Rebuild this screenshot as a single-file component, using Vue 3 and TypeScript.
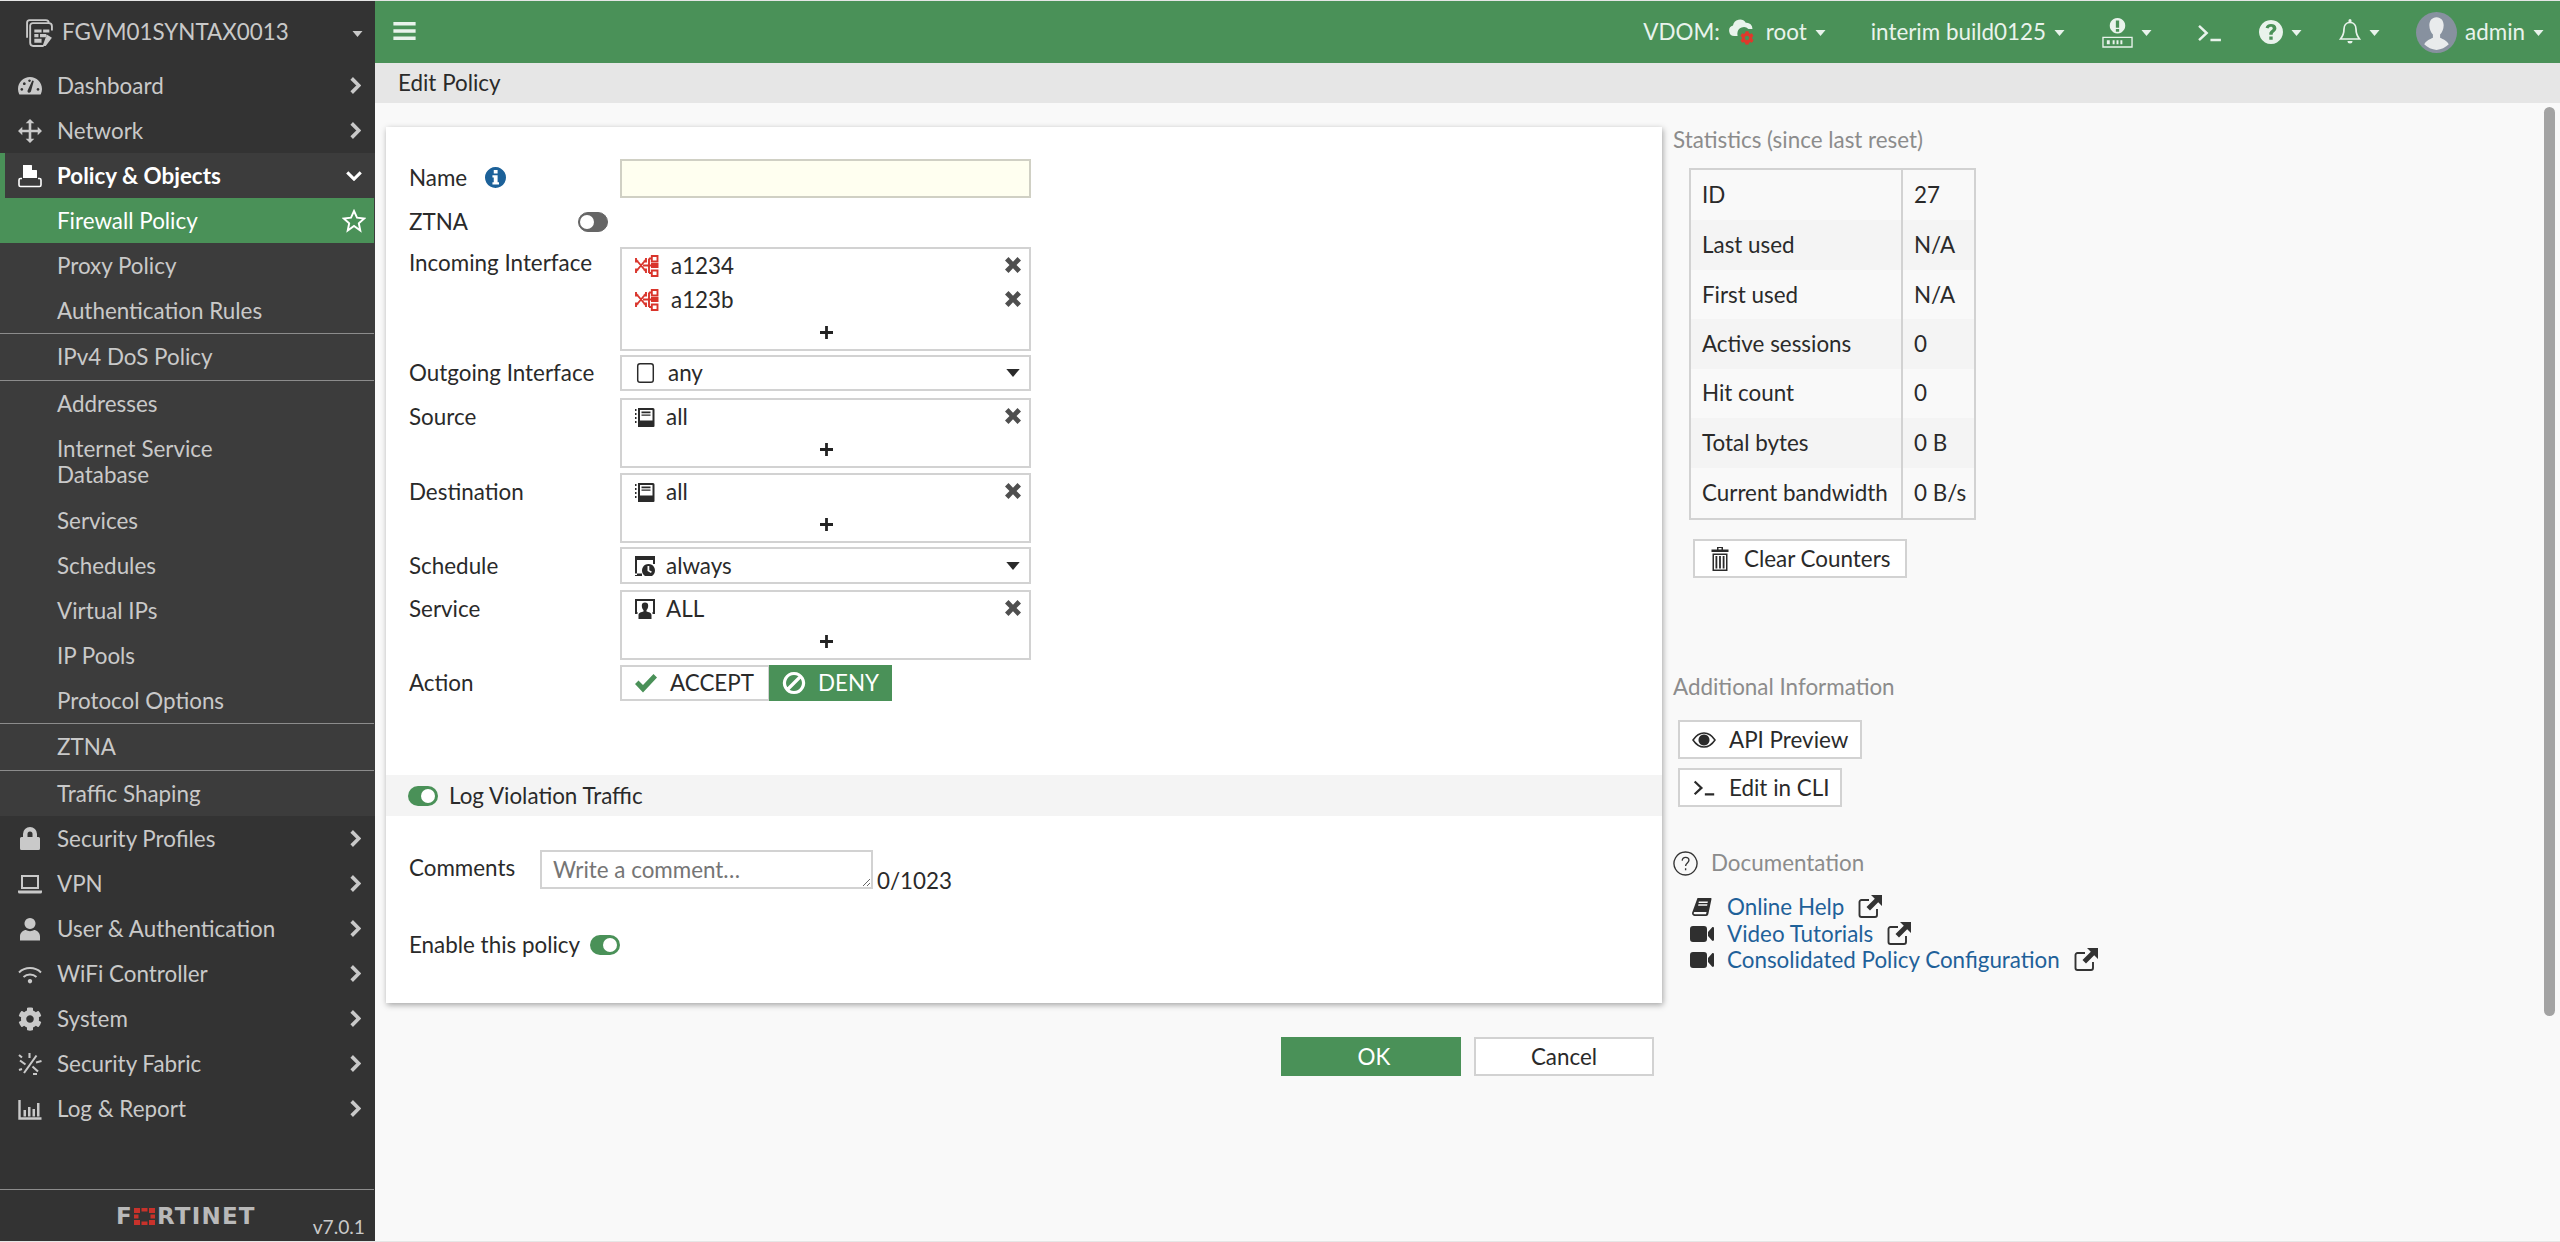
<script setup lang="ts">
import { h } from 'vue'
import type { FunctionalComponent } from 'vue'

interface IconDef {
  vb?: string
  fill?: string
  stroke?: string
  sw?: number
}

const icons: Record<string, IconDef> = {
  device: {
    stroke: 'M2 19V4.500A2.500 2.500 0 0 1 4.500 2H20a3 3 0 0 1 3 3M5 24V7.500A2.500 2.500 0 0 1 7.500 5H23a3 3 0 0 1 3 3v4M5 24a3 3 0 0 0 3 3h10',
    fill: 'M9 11h7v3H9zM17.500 11h6v3h-6zM9 15.500h4v3H9zM14.500 15.500h6v3h-6zM9 20h7v4H9zM21 16l5 3-6 8h-3z',
    vb: '0 0 28 28',
    sw: 1.8,
  },
  dashboard: {
    fill: 'M12 3C5.400 3 0 8.400 0 15c0 1.800.4 3.500 1.100 5 .2.400.5.600.9.600h20c.4 0 .7-.2.9-.6.7-1.500 1.100-3.200 1.100-5 0-6.600-5.400-12-12-12zM3.800 14a1.400 1.400 0 1 0 .01 0zM6.300 8.300a1.400 1.400 0 1 0 .01 0zM11.500 5.400a1.300 1.300 0 1 0 .01 0zM20 14a1.400 1.400 0 1 0 .01 0zM14.300 6.500l1.500.5-2.800 10.300c-.3 1-1.200 1.700-2.200 1.400-1-.3-1.500-1.300-1.200-2.300z',
  },
  network: {
    fill: 'M12 0l4.300 4.300H13.300V10.700H19.700V7.700L24 12l-4.300 4.300V13.300H13.300V19.700H16.300L12 24 7.700 19.700H10.700V13.300H4.300V16.300L0 12 4.300 7.700V10.700H10.700V4.300H7.700z',
  },
  policy: {
    fill: 'M5 1h8.500L19 6.500V14H5zM14 1.500V6h4.500z',
    stroke: 'M4 14.500H2.500A1.500 1.500 0 0 0 1 16v5a1.500 1.500 0 0 0 1.500 1.500h19A1.500 1.500 0 0 0 23 21v-5a1.500 1.500 0 0 0-1.500-1.500H20',
    sw: 1.6,
  },
  lock: {
    fill: 'M5 10V7a7 7 0 0 1 14 0v3h1.500A1.500 1.500 0 0 1 22 11.500v10a1.500 1.500 0 0 1-1.500 1.500h-17A1.500 1.500 0 0 1 2 21.500v-10A1.500 1.500 0 0 1 3.500 10zm4.500 0h5V7a2.500 2.500 0 0 0-5 0z',
  },
  laptop: {
    fill: 'M3 3h18v14H3zM5 5v10h14V5zM0 18.500h24V20a1.500 1.500 0 0 1-1.500 1.500h-21A1.500 1.500 0 0 1 0 20z',
  },
  user: {
    fill: 'M12 1a5.500 5.500 0 1 1-.01 0zM2 23.500v-4c0-4 3.500-6.500 6-6.500 1 .7 2.500 1.200 4 1.200s3-.5 4-1.200c2.500 0 6 2.500 6 6.500v4z',
  },
  wifi: {
    stroke: 'M1 10.500a16 16 0 0 1 22 0M5.500 15a9.500 9.500 0 0 1 13 0',
    fill: 'M12 17a2.200 2.200 0 1 1-.01 0z',
    sw: 2,
  },
  cog: {
    vb: '0 0 512 512',
    fill: 'M487.4 315.7l-42.6-24.6c4.3-23.2 4.3-47 0-70.2l42.6-24.6c4.900-2.800 7.100-8.600 5.500-14-11.100-35.600-30-67.800-54.700-94.600-3.800-4.100-10-5.100-14.800-2.300L380.800 110c-17.900-15.400-38.500-27.300-60.800-35.100V25.800c0-5.600-3.900-10.500-9.400-11.700-36.700-8.200-74.300-7.800-109.200 0-5.500 1.200-9.400 6.100-9.400 11.700V75c-22.200 7.900-42.800 19.800-60.800 35.100L88.700 85.500c-4.900-2.800-11-1.900-14.800 2.300-24.700 26.700-43.600 58.900-54.700 94.600-1.700 5.400.6 11.200 5.500 14L67.300 221c-4.300 23.200-4.300 47 0 70.200l-42.6 24.600c-4.900 2.800-7.100 8.600-5.500 14 11.100 35.600 30 67.800 54.700 94.600 3.800 4.100 10 5.100 14.800 2.300l42.600-24.600c17.900 15.400 38.500 27.300 60.800 35.100v49.200c0 5.600 3.900 10.500 9.400 11.700 36.700 8.200 74.300 7.800 109.200 0 5.500-1.200 9.400-6.100 9.400-11.700v-49.200c22.200-7.900 42.800-19.800 60.800-35.100l42.600 24.600c4.900 2.800 11 1.900 14.800-2.300 24.700-26.700 43.600-58.900 54.700-94.600 1.500-5.500-.7-11.300-5.600-14.100zM256 336c-44.100 0-80-35.900-80-80s35.900-80 80-80 80 35.900 80 80-35.900 80-80 80z',
  },
  fabric: {
    stroke: 'M18.500 3.500L6 21M2 8.500l5.500 4M14.500 14.500l5.500 5M11.500 1v5M18 10.500l5.500-1.500M1 3l3 2.500M15 22h4M1 18l3-1',
    sw: 2.100,
  },
  chart: {
    stroke: 'M1.500 3v18.500h22',
    fill: 'M5.500 13h2.500v6.500H5.500zM10 10h2.500v9.500H10zM14.500 12h2.500v7.500h-2.500zM19 6h2.500v13.500H19z',
    sw: 2.400,
  },
  chevRight: { vb: '0 0 12 20', stroke: 'M2.500 2.500l7.500 7.500-7.500 7.500', sw: 3.800 },
  chevDown: { vb: '0 0 20 12', stroke: 'M2.500 2.500l7.500 7.500 7.500-7.500', sw: 3.400 },
  star: { stroke: 'M12 2l3 6.700 7.200.8-5.400 4.800 1.500 7.200L12 17l-6.300 4.500 1.500-7.200L1.800 9.500l7.200-.8z', sw: 1.900 },
  caret: { vb: '0 0 10 6', fill: 'M0 0h10L5 6z' },
  menu: { vb: '0 0 20 18', fill: 'M0 1h20v3H0zM0 7.500h20v3H0zM0 14h20v3H0z' },
  vdom: {
    vb: '0 0 24 17',
    fill: 'M5.500 17A5.300 5.300 0 0 1 4 6.600 7 7 0 0 1 16.800 3.800 5.800 5.800 0 0 1 23.400 10h-4a6.500 6.500 0 0 0-11 4c-.1 1 0 2 .2 3z',
  },
  alert: {
    vb: '0 0 32 32',
    fill: 'M16 1a8 8 0 1 1-.01 0zM14.300 3.500v7.500h3.400V3.500zM14.300 12.300v2.800h3.400v-2.800zM5 24h3v4H5zM11 24h2v4h-2zM15 24h2v4h-2zM19 24h2v4h-2z',
    stroke: 'M1 21h30v10H1z',
    sw: 1.400,
  },
  terminal: { vb: '0 0 26 20', stroke: 'M2 3l8 7.500L2 18M14 18h11', sw: 2.600 },
  help: {
    fill: 'M12 0a12 12 0 1 1-.01 0zM12 4c-3 0-4.900 1.400-5.400 3.800l3 .8c.3-1.100 1-1.800 2.200-1.800 1.200 0 2 .6 2 1.500 0 1.900-3.500 2.300-3.500 5.700v.8h3.400v-.5c0-2.200 3.700-2.800 3.700-6.100C17.400 5.500 15.200 4 12 4zM10.300 16.500v3.300h3.400v-3.300z',
  },
  bell: {
    vb: '0 0 22 26',
    stroke: 'M11 3.500c-4 0-6 3-6 6.500 0 5-1.500 7.500-3.500 10h19c-2-2.500-3.500-5-3.500-10 0-3.500-2-6.500-6-6.500z',
    fill: 'M9.500 1.500a1.500 1.500 0 0 1 3 0V4h-3zM8.500 22h5a2.500 2.500 0 0 1-5 0z',
    sw: 1.700,
  },
  info: {
    fill: 'M12 0a12 12 0 1 1-.01 0zM10 3.500v3.800h4.400V3.500zM8.500 9.500v2.500H10v5.500H8.500V20h7.500v-2.500h-1.600v-8z',
  },
  iface: {
    vb: '0 0 24 22',
    stroke: 'M1 4.500l10 12M1 16.500l10-12M1 3v3.500h2.500M1 18v-3.500h2.500M11 3v3.500H8.500M11 18v-3.500H8.500M8 10.500h8M14 3.500v14.500M14 3.500h2M14 18h2M16.800 1h5.700v5.500h-5.700zM16.800 15.500h5.700V21h-5.700z',
    sw: 1.900,
    fill: 'M16 8h7.500v5H16z',
  },
  square: { vb: '0 0 20 24', stroke: 'M4 2h12a2.500 2.500 0 0 1 2.500 2.500v15A2.500 2.500 0 0 1 16 22H4a2.500 2.500 0 0 1-2.500-2.500v-15A2.500 2.500 0 0 1 4 2z', sw: 1.600 },
  close: { vb: '0 0 16 18', fill: 'M3.500 1L8 5.800 12.500 1 16 4.500 11.500 9 16 13.500 12.500 17 8 12.200 3.500 17 0 13.500 4.500 9 0 4.500z' },
  plus: { vb: '0 0 14 14', fill: 'M5.500 0h3v5.500H14v3H8.500V14h-3V8.500H0v-3h5.500z' },
  book: {
    vb: '0 0 20 20',
    fill: 'M3 1h15a1.500 1.500 0 0 1 1.500 1.500V19a1 1 0 0 1-1 1H3zM5 3v10.500h12.500V3zM6.500 4.500h9v1.800h-9zM6.500 7.500h9v1.300h-9zM0 2h1.500v2H0zM0 6h1.500v2H0zM0 10h1.500v2H0zM0 14h1.500v2H0z',
  },
  sched: {
    vb: '0 0 20 20',
    fill: 'M0 0h20v4H0zM0 4h2v15H0zM0 17.500h7V20H0zM13.500 8a6.500 6.500 0 1 1-.01 0zM12.500 10v5l3.500 2 .8-1.400-2.500-1.400V10zM18 4h2v4h-2z',
  },
  service: {
    vb: '0 0 20 20',
    fill: 'M0 0h20v15h-2.500v-2H18V2H2v11h.5v2H0zM10 3.500a3.200 3.200 0 0 1 3.200 3.200c0 2-1 3.800-1.700 4.300v1.500c2 .5 5 1.200 5 3.500v4H3.500v-4c0-2.300 3-3 5-3.500V11c-.7-.5-1.700-2.300-1.700-4.300A3.200 3.200 0 0 1 10 3.500z',
  },
  check: { vb: '0 0 22 20', fill: 'M0 11l3.500-3.500L8 12 18.500 1 22 4.500 8 19.500z' },
  deny: { vb: '0 0 24 24', stroke: 'M12 2.500a9.500 9.500 0 1 1-.01 0zM5.500 18.500l13-13', sw: 3.200 },
  trash: {
    vb: '0 0 18 24',
    fill: 'M6 0h6v2.500h5.500V5H.5V2.500H6zM7.500 1v1.500h3V1zM1.500 6.500h15V24h-15zM3 8v14.500h12V8zM4.500 9h1.800v12.500H4.500zM8.100 9h1.800v12.500H8.100zM11.700 9h1.800v12.500h-1.800z',
  },
  eye: {
    vb: '0 0 24 16',
    stroke: 'M1 8c3-4.500 6.800-7 11-7s8 2.500 11 7c-3 4.500-6.800 7-11 7S4 12.500 1 8z',
    fill: 'M12 2.500a5.500 5.500 0 1 1-.01 0z',
    sw: 1.500,
  },
  helpRing: { stroke: 'M12 1a11 11 0 1 1-.01 0zM8.800 9.300c.2-2 1.500-3.200 3.300-3.200 1.900 0 3.200 1.100 3.200 2.800 0 2.600-3.200 2.600-3.200 5.500M12.100 16.500v2', sw: 1.300 },
  handbook: {
    vb: '0 0 22 20',
    fill: 'M6 0h14.500a1 1 0 0 1 1 1.300L18 18a2.500 2.500 0 0 1-2.500 2H3a3 3 0 0 1-3-3.500zM7.500 4l-.3 1.500h10l.3-1.500zM7 7l-.3 1.500h10L17 7zM3 15.500c-.8 0-1.300.7-1.300 1.300 0 .7.5 1.200 1.300 1.200h12.400c.4-.8.500-1.700.6-2.500z',
  },
  video: {
    vb: '0 0 24 18',
    fill: 'M3 1h11a3 3 0 0 1 3 3v10a3 3 0 0 1-3 3H3a3 3 0 0 1-3-3V4a3 3 0 0 1 3-3zM18 7l4-4.500c.8-.8 2-.3 2 .8v11.400c0 1.100-1.200 1.600-2 .8l-4-4.500z',
  },
  external: {
    stroke: 'M11 5H3.500A2 2 0 0 0 1.500 7v13a2 2 0 0 0 2 2H17a2 2 0 0 0 2-2v-6',
    fill: 'M13 0h11v11l-3.800-3.800L12 15.500 8.500 12 16.800 3.800z',
    sw: 1.900,
  },
}

const Ico: FunctionalComponent<{ name: string }> = (props) => {
  const def = icons[props.name]
  const kids = []
  if (def.fill) kids.push(h('path', { d: def.fill, fill: 'currentColor', 'fill-rule': 'evenodd' }))
  if (def.stroke) {
    kids.push(h('path', { d: def.stroke, fill: 'none', stroke: 'currentColor', 'stroke-width': def.sw ?? 2 }))
  }
  return h('svg', { viewBox: def.vb ?? '0 0 24 24', 'aria-hidden': 'true' }, kids)
}

const navTop = [
  { label: 'Dashboard', icon: 'dashboard' },
  { label: 'Network', icon: 'network' },
]

const groupItems = [
  { label: 'Firewall Policy', active: true },
  { label: 'Proxy Policy' },
  { label: 'Authentication Rules', divided: true },
  { label: 'IPv4 DoS Policy', divided: true, wide: true },
  { label: 'Addresses' },
  { label: 'Internet Service Database', tall: true },
  { label: 'Services' },
  { label: 'Schedules' },
  { label: 'Virtual IPs' },
  { label: 'IP Pools' },
  { label: 'Protocol Options', divided: true },
  { label: 'ZTNA', divided: true, wide: true },
  { label: 'Traffic Shaping' },
]

const navBottom = [
  { label: 'Security Profiles', icon: 'lock' },
  { label: 'VPN', icon: 'laptop' },
  { label: 'User & Authentication', icon: 'user' },
  { label: 'WiFi Controller', icon: 'wifi' },
  { label: 'System', icon: 'cog' },
  { label: 'Security Fabric', icon: 'fabric' },
  { label: 'Log & Report', icon: 'chart' },
]

const stats = [
  ['ID', '27'],
  ['Last used', 'N/A'],
  ['First used', 'N/A'],
  ['Active sessions', '0'],
  ['Hit count', '0'],
  ['Total bytes', '0 B'],
  ['Current bandwidth', '0 B/s'],
]

const docs = [
  { label: 'Online Help', icon: 'handbook' },
  { label: 'Video Tutorials', icon: 'video' },
  { label: 'Consolidated Policy Configuration', icon: 'video' },
]
</script>

<template>
  <div class="app">
    <aside class="sidebar">
      <div class="device">
        <Ico name="device" class="device-icon" />
        <span class="device-name">FGVM01SYNTAX0013</span>
        <Ico name="caret" class="device-caret" />
      </div>
      <nav class="nav">
        <a v-for="n in navTop" :key="n.label" class="nav-row">
          <Ico :name="n.icon" class="nav-icon" />
          <span class="nav-label">{{ n.label }}</span>
          <Ico name="chevRight" class="chev" />
        </a>
        <div class="group">
          <a class="nav-row open">
            <Ico name="policy" class="nav-icon" />
            <span class="nav-label">Policy &amp; Objects</span>
            <Ico name="chevDown" class="chev-down" />
          </a>
          <a
            v-for="g in groupItems"
            :key="g.label"
            class="sub-row"
            :class="{ active: g.active, divided: g.divided, tall: g.tall, wide: g.wide }"
          >
            <span class="sub-label">{{ g.label }}</span>
            <Ico v-if="g.active" name="star" class="star" />
          </a>
        </div>
        <a v-for="n in navBottom" :key="n.label" class="nav-row">
          <Ico :name="n.icon" class="nav-icon" />
          <span class="nav-label">{{ n.label }}</span>
          <Ico name="chevRight" class="chev" />
        </a>
      </nav>
      <footer class="side-foot">
        <div class="logo">
          <span>F</span>
          <svg class="logo-grid" viewBox="0 0 21 17" aria-hidden="true">
            <path d="M0 0h6v5H0zM7.500 0h6v3.500h-6zM15 0h6v5h-6zM0 6.500h4.500v4H0zM16.500 6.500H21v4h-4.500zM0 12h6v5H0zM7.500 13.500h6V17h-6zM15 12h6v5h-6z" fill="#c8322b" />
          </svg>
          <span>RTINET</span>
        </div>
        <span class="version">v7.0.1</span>
      </footer>
    </aside>

    <div class="workspace">
      <header class="topbar">
        <Ico name="menu" class="hamburger" />
        <div class="top-items">
          <div class="top-item vdom">
            <span>VDOM:</span>
            <span class="vdom-mark">
              <Ico name="vdom" class="vdom-cloud" />
              <Ico name="cog" class="vdom-gear" />
            </span>
            <span class="vdom-name">root</span>
            <Ico name="caret" class="top-caret" />
          </div>
          <div class="top-item build">
            <span>interim build0125</span>
            <Ico name="caret" class="top-caret" />
          </div>
          <div class="top-item alert">
            <Ico name="alert" class="alert-icon" />
            <Ico name="caret" class="top-caret" />
          </div>
          <div class="top-item term">
            <Ico name="terminal" class="term-icon" />
          </div>
          <div class="top-item help">
            <Ico name="help" class="help-icon" />
            <Ico name="caret" class="top-caret" />
          </div>
          <div class="top-item bell">
            <Ico name="bell" class="bell-icon" />
            <Ico name="caret" class="top-caret" />
          </div>
          <div class="top-item admin">
            <svg class="avatar" viewBox="0 0 40 40" aria-hidden="true">
              <circle cx="20" cy="20" r="20" fill="#87919f" />
              <path d="M20 5c4.500 0 7 3.500 7 8 0 4-1.800 7.500-3.500 9v3c3 1.500 7 3 8.500 6.500A20 20 0 0 1 20 37a20 20 0 0 1-12-5.500C9.500 28 13.500 26.500 16.500 25v-3C14.800 20.500 13 17 13 13c0-4.500 2.500-8 7-8z" fill="#e9ebec" />
            </svg>
            <span>admin</span>
            <Ico name="caret" class="top-caret" />
          </div>
        </div>
      </header>

      <div class="crumb">Edit Policy</div>

      <main class="content">
        <div class="left-col">
          <section class="card">
            <div class="row">
              <label class="lbl name-lbl">Name <Ico name="info" class="info-icon" /></label>
              <input class="name-input" type="text" />
            </div>
            <div class="row ztna-row">
              <span class="lbl ztna-lbl">ZTNA</span>
              <span class="toggle off"></span>
            </div>
            <div class="row top">
              <span class="lbl first">Incoming Interface</span>
              <div class="multi incoming">
                <div class="entry"><Ico name="iface" class="iface" /><span class="ent-text wide">a1234</span><Ico name="close" class="x" /></div>
                <div class="entry"><Ico name="iface" class="iface" /><span class="ent-text wide">a123b</span><Ico name="close" class="x" /></div>
                <Ico name="plus" class="add" />
              </div>
            </div>
            <div class="row gap4">
              <span class="lbl">Outgoing Interface</span>
              <div class="select outgoing">
                <Ico name="square" class="square" />
                <span class="ent-text wide">any</span>
                <Ico name="caret" class="sel-caret" />
              </div>
            </div>
            <div class="row top gap7">
              <span class="lbl">Source</span>
              <div class="multi single">
                <div class="entry"><Ico name="book" class="obj" /><span class="ent-text">all</span><Ico name="close" class="x" /></div>
                <Ico name="plus" class="add" />
              </div>
            </div>
            <div class="row top gap5">
              <span class="lbl">Destination</span>
              <div class="multi single">
                <div class="entry"><Ico name="book" class="obj" /><span class="ent-text">all</span><Ico name="close" class="x" /></div>
                <Ico name="plus" class="add" />
              </div>
            </div>
            <div class="row top gap4">
              <span class="lbl">Schedule</span>
              <div class="select schedule">
                <Ico name="sched" class="obj" />
                <span class="ent-text">always</span>
                <Ico name="caret" class="sel-caret" />
              </div>
            </div>
            <div class="row top gap6">
              <span class="lbl">Service</span>
              <div class="multi single">
                <div class="entry"><Ico name="service" class="obj" /><span class="ent-text">ALL</span><Ico name="close" class="x" /></div>
                <Ico name="plus" class="add" />
              </div>
            </div>
            <div class="row gap5">
              <span class="lbl">Action</span>
              <div class="actions">
                <span class="act accept"><Ico name="check" class="act-icon green" />ACCEPT</span>
                <span class="act deny"><Ico name="deny" class="act-icon" />DENY</span>
              </div>
            </div>

            <div class="band">
              <span class="toggle on"></span>
              <span>Log Violation Traffic</span>
            </div>

            <div class="row comments">
              <span class="comment-lbl">Comments</span>
              <textarea class="comment-box" placeholder="Write a comment…"></textarea>
              <span class="counter">0/1023</span>
            </div>
            <div class="row enable">
              <span>Enable this policy</span>
              <span class="toggle on"></span>
            </div>
          </section>
          <div class="form-actions">
            <button class="btn primary">OK</button>
            <button class="btn">Cancel</button>
          </div>
        </div>

        <aside class="info-panel">
          <h3 class="panel-title">Statistics (since last reset)</h3>
          <table class="stats">
            <tbody>
              <tr v-for="s in stats" :key="s[0]">
                <td class="k">{{ s[0] }}</td>
                <td class="v">{{ s[1] }}</td>
              </tr>
            </tbody>
          </table>
          <button class="tool clear"><Ico name="trash" class="trash" />Clear Counters</button>

          <h3 class="panel-title additional">Additional Information</h3>
          <button class="tool api"><Ico name="eye" class="eye" />API Preview</button>
          <button class="tool cli"><Ico name="terminal" class="cli-icon" />Edit in CLI</button>

          <h3 class="panel-title doc-title"><Ico name="helpRing" class="ring" />Documentation</h3>
          <ul class="docs">
            <li v-for="d in docs" :key="d.label">
              <Ico :name="d.icon" class="doc-icon" />
              <a class="doc-link">{{ d.label }}</a>
              <Ico name="external" class="ext" />
            </li>
          </ul>
        </aside>

        <div class="scrollbar"></div>
      </main>
    </div>
  </div>
</template>

<style>
html,
body {
  margin: 0;
  background: #e6e6e6;
}
</style>

<style scoped>
.app {
  width: 2560px;
  height: 1240px;
  margin: 1px 0;
  display: flex;
  font-family: Lato, "Noto Sans", sans-serif;
  font-size: 22.4px;
  line-height: 26px;
  color: #2a2a2a;
  overflow: hidden;
  position: relative;
}
svg {
  display: block;
  flex: none;
}

/* sidebar */
.sidebar {
  width: 375px;
  flex: none;
  background: #333;
  color: #c9c9c9;
  display: flex;
  flex-direction: column;
}
.device {
  height: 62px;
  display: flex;
  align-items: center;
  padding-left: 25px;
}
.device-icon {
  width: 29px;
  height: 29px;
  margin-right: 8px;
}
.device-name {
  flex: 1;
}
.device-caret {
  width: 11px;
  height: 6px;
  margin-right: 12px;
  margin-top: 3px;
}
.nav-row {
  height: 45px;
  display: flex;
  align-items: center;
  padding-left: 18px;
}
.nav-icon {
  width: 24px;
  height: 24px;
  margin-right: 15px;
}
.nav-label {
  flex: 1;
}
.chev {
  width: 12px;
  height: 19px;
  margin-right: 14px;
}
.chev-down {
  width: 18px;
  height: 11px;
  margin-right: 12px;
}
.group {
  background: #3c3c3c;
}
.nav-row.open {
  border-left: 5px solid #4a9158;
  padding-left: 13px;
  color: #fff;
  font-weight: 700;
}
.sub-row {
  min-height: 45px;
  box-sizing: border-box;
  display: flex;
  align-items: center;
  padding-left: 57px;
  margin-right: 1px;
}
.sub-row.divided {
  border-bottom: 1px solid #8c8c8c;
  min-height: 46px;
}
.sub-row.wide {
  min-height: 47px;
}
.sub-row.tall {
  min-height: 72px;
}
.sub-label {
  flex: 1;
  max-width: 240px;
}
.sub-row.active {
  background: #4a9158;
  color: #fff;
  justify-content: space-between;
}
.star {
  width: 24px;
  height: 24px;
  margin-right: 8px;
}
.side-foot {
  margin-top: auto;
  height: 52px;
  margin-right: 1px;
  box-sizing: border-box;
  border-top: 1px solid #8c8c8c;
  display: flex;
  justify-content: space-between;
  padding: 17px 9px 0 116px;
}
.logo {
  height: 18px;
  display: flex;
  gap: 1px;
  align-items: center;
  font-family: "DejaVu Sans", sans-serif;
  font-weight: 700;
  font-size: 23px;
  line-height: 18px;
  letter-spacing: 1.200px;
  color: #b9b9b9;
}
.logo-grid {
  width: 21px;
  height: 17px;
  margin-right: 1px;
}
.version {
  font-size: 19.200px;
  line-height: 26px;
  margin-top: 7px;
}

/* workspace */
.workspace {
  flex: 1;
  display: flex;
  flex-direction: column;
  min-width: 0;
}
.topbar {
  height: 62px;
  flex: none;
  background: #4a9158;
  color: #e9f3ec;
  display: flex;
  align-items: center;
  padding: 0 16px 0 18px;
}
.hamburger {
  width: 23px;
  height: 20px;
  margin-top: -2px;
}
.top-items {
  margin-left: auto;
  display: flex;
  align-items: center;
}
.top-item {
  display: flex;
  align-items: center;
}
.top-caret {
  width: 11px;
  height: 6px;
  margin-left: 8px;
  margin-top: 2px;
}
.vdom-mark {
  display: block;
  position: relative;
  margin: 0 12px 0 9px;
  width: 25px;
  height: 26px;
}
.vdom-cloud {
  width: 24px;
  height: 17px;
}
.vdom-gear {
  position: absolute;
  left: 11px;
  top: 12px;
  width: 14px;
  height: 14px;
  color: #e0382b;
}
.build {
  margin-left: 45px;
}
.alert {
  margin-left: 37px;
}
.alert-icon {
  width: 31px;
  height: 31px;
}
.term {
  margin-left: 45px;
}
.term-icon {
  width: 25px;
  height: 19px;
}
.help {
  margin-left: 37px;
}
.help-icon {
  width: 24px;
  height: 24px;
}
.bell {
  margin-left: 37px;
}
.bell-icon {
  width: 22px;
  height: 26px;
}
.admin {
  margin-left: 36px;
}
.avatar {
  width: 41px;
  height: 41px;
  margin-right: 8px;
}

.crumb {
  height: 40px;
  flex: none;
  background: #e6e6e6;
  box-sizing: border-box;
  padding-left: 23px;
  line-height: 40px;
}

.content {
  flex: 1;
  background: #f9f9f9;
  display: flex;
  position: relative;
  padding: 24px 0 0 11px;
  min-height: 0;
}
.left-col {
  width: 1276px;
  flex: none;
}
.card {
  height: 876px;
  box-sizing: border-box;
  background: #fff;
  padding: 32px 0 0 23px;
  box-shadow: 1px 2px 6px rgba(0, 0, 0, 0.35);
}
.row {
  display: flex;
  align-items: center;
}
.row.top {
  align-items: flex-start;
}
.lbl {
  width: 211px;
  flex: none;
  display: flex;
  align-items: center;
}
.row.top .lbl {
  padding-top: 6px;
}
.row.top .lbl.first {
  padding-top: 3px;
}
.name-lbl {
  margin-top: -2px;
}
.info-icon {
  width: 21px;
  height: 21px;
  margin-left: 18px;
  color: #1c6199;
}
.name-input {
  width: 411px;
  height: 39px;
  box-sizing: border-box;
  border: 2px solid #d0d0c4;
  background: #fffff0;
  outline: none;
  padding: 0;
  font: inherit;
}
.ztna-row {
  margin-top: 14px;
  height: 20px;
  margin-bottom: 15px;
}
.ztna-lbl {
  width: 169px;
}
.toggle {
  display: block;
  width: 30px;
  height: 20px;
  box-sizing: border-box;
  border-radius: 10px;
  position: relative;
  flex: none;
}
.toggle::after {
  content: "";
  position: absolute;
  width: 14px;
  height: 14px;
  top: 3px;
  border-radius: 50%;
  background: #fff;
}
.toggle.off {
  background: #666;
  border: 1px solid #666;
}
.toggle.off::after {
  left: 1px;
  top: 2px;
}
.toggle.on {
  background: #4a9158;
}
.toggle.on::after {
  right: 3px;
}
.gap4 {
  margin-top: 4px;
}
.gap5 {
  margin-top: 5px;
}
.gap6 {
  margin-top: 6px;
}
.gap7 {
  margin-top: 7px;
}
.multi,
.select {
  width: 411px;
  box-sizing: border-box;
  border: 2px solid #d2d2d2;
  background: #fff;
  flex: none;
}
.multi {
  display: flex;
  flex-direction: column;
}
.incoming {
  height: 104px;
}
.single {
  height: 70px;
}
.entry {
  height: 34px;
  display: flex;
  align-items: center;
  padding-left: 13px;
}
.select {
  display: flex;
  align-items: center;
  padding-left: 13px;
}
.outgoing {
  height: 36px;
}
.schedule {
  height: 37px;
}
.iface {
  width: 24px;
  height: 22px;
  color: #d9342b;
  margin-top: -1px;
}
.obj {
  width: 20px;
  height: 20px;
}
.square {
  width: 19px;
  height: 22px;
  margin-left: 1px;
  margin-right: 1px;
}
.ent-text {
  flex: 1;
  margin-left: 11px;
}
.ent-text.wide {
  margin-left: 12px;
}
.x {
  width: 16px;
  height: 18px;
  color: #4f4f4f;
  margin-right: 8px;
  margin-top: -2px;
}
.sel-caret {
  width: 14px;
  height: 8px;
  color: #2a2a2a;
  margin-right: 9px;
}
.add {
  width: 13px;
  height: 13px;
  margin: auto 0 10px 198px;
  color: #222;
}
.actions {
  display: flex;
  height: 36px;
}
.act {
  display: flex;
  align-items: center;
  box-sizing: border-box;
  padding-left: 13px;
}
.accept {
  width: 149px;
  border: 2px solid #d2d2d2;
  border-right-width: 1px;
}
.deny {
  width: 123px;
  background: #4a9158;
  color: #fff;
}
.act-icon {
  width: 22px;
  height: 20px;
  margin-right: 13px;
}
.deny .act-icon {
  width: 24px;
  height: 24px;
  margin-right: 12px;
}
.green {
  color: #4a9158;
}
.band {
  margin: 74px 0 0 -23px;
  padding-left: 22px;
  height: 41px;
  background: #f4f4f4;
  display: flex;
  align-items: center;
  gap: 11px;
}
.comments {
  margin-top: 34px;
  align-items: flex-start;
}
.comment-lbl {
  width: 131px;
  padding-top: 5px;
}
.comment-box {
  width: 333px;
  height: 39px;
  box-sizing: border-box;
  border: 2px solid #d2d2d2;
  padding: 5px 11px;
  font: inherit;
  line-height: 26px;
  outline: none;
  overflow: hidden;
  resize: both;
  display: block;
}
.counter {
  margin: 18px 0 0 4px;
}
.enable {
  margin-top: 38px;
  gap: 10px;
}

.form-actions {
  margin-top: 34px;
  display: flex;
  justify-content: flex-end;
  gap: 13px;
  padding-right: 8px;
}
.btn {
  width: 180px;
  height: 39px;
  box-sizing: border-box;
  border: 2px solid #d2d2d2;
  background: #fff;
  color: #2a2a2a;
  font: inherit;
  padding: 0;
}
.btn.primary {
  border-color: #4a9158;
  background: #4a9158;
  color: #fff;
  padding-left: 6px;
}

/* right panel */
.info-panel {
  margin-left: 11px;
  width: 500px;
  display: flex;
  flex-direction: column;
  align-items: flex-start;
}
.panel-title {
  margin: -2px 0 0;
  font: inherit;
  line-height: 30px;
  color: #8c8c8c;
}
.stats {
  margin: 13px 0 0 16px;
  border-collapse: collapse;
  border: 2px solid #d2d2d2;
  width: 287px;
  height: 352px;
  table-layout: fixed;
}
.stats tr:nth-child(even) {
  background: #f4f4f4;
}
.k {
  width: 212px;
  box-sizing: border-box;
  padding: 0 0 0 11px;
  border-right: 2px solid #d2d2d2;
  white-space: nowrap;
}
.v {
  padding: 0 0 0 11px;
  white-space: nowrap;
}
.tool {
  display: flex;
  align-items: center;
  height: 39px;
  box-sizing: border-box;
  border: 2px solid #d2d2d2;
  background: #fff;
  padding: 0;
  font: inherit;
  color: #2a2a2a;
}
.clear {
  width: 214px;
  margin: 19px 0 0 20px;
  padding-left: 16px;
}
.trash {
  width: 18px;
  height: 24px;
  margin-right: 15px;
}
.additional {
  margin-top: 94px;
}
.api {
  width: 184px;
  margin: 18px 0 0 5px;
  padding-left: 12px;
}
.eye {
  width: 24px;
  height: 16px;
  margin-right: 13px;
}
.cli {
  width: 164px;
  margin: 9px 0 0 5px;
  padding-left: 12px;
}
.cli-icon {
  width: 24px;
  height: 17px;
  margin-right: 13px;
}
.doc-title {
  margin-top: 41px;
  display: flex;
  align-items: center;
  gap: 13px;
}
.ring {
  width: 25px;
  height: 25px;
  color: #333;
}
.docs {
  list-style: none;
  margin: 16px 0 0 17px;
  padding: 0;
}
.docs li {
  display: flex;
  align-items: center;
  height: 26.500px;
}
.doc-icon {
  width: 24px;
  height: 18px;
  color: #2f2f2f;
  margin-right: 13px;
}
.doc-link {
  color: #1f6199;
}
.ext {
  width: 24px;
  height: 24px;
  margin-left: 14px;
  color: #333;
}
.scrollbar {
  position: absolute;
  right: 5px;
  top: 4px;
  width: 11px;
  height: 909px;
  border-radius: 6px;
  background: #a3a3a3;
}
</style>
